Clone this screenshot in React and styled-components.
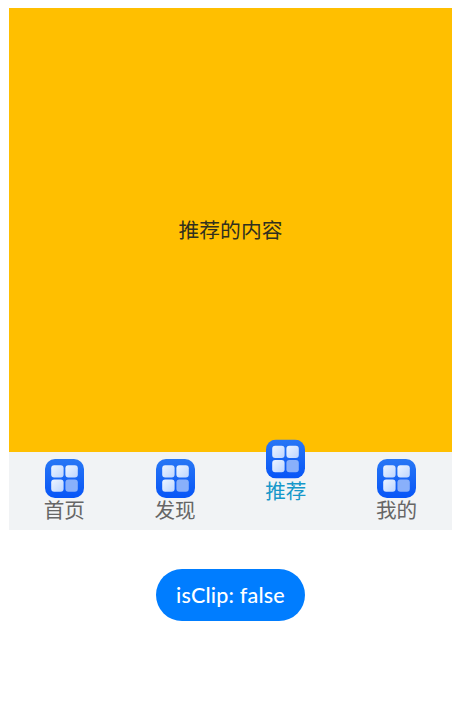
import React, { useState } from "react";
import styled, { createGlobalStyle } from "styled-components";

const GlobalStyle = createGlobalStyle`
  body {
    margin: 0;
    background: #fff;
    font-family: "Noto Sans CJK SC", sans-serif;
  }
`;

const Page = styled.main`
  display: flex;
  flex-direction: column;
  align-items: flex-start;
  box-sizing: border-box;
  height: 705px;
  padding: 8px 12px 0 9px;
`;

const Tabs = styled.section`
  display: flex;
  flex-direction: column;
  width: 443px;
  height: 522px;
  overflow: ${({ $clip }) => ($clip ? "hidden" : "visible")};
`;

const Content = styled.div`
  display: flex;
  flex: 1;
  align-items: center;
  justify-content: center;
  padding-bottom: 3px;
  background: #ffbf00;
  color: #30301f;
  font-size: 20.8px;
  line-height: 28px;
`;

const TabBar = styled.nav`
  display: grid;
  grid-template-columns: repeat(4, 1fr);
  height: 78px;
  background: #f1f3f5;
`;

const Tab = styled.button`
  display: flex;
  flex-direction: column;
  align-items: center;
  justify-content: flex-start;
  padding: 7px 0 0;
  border: 0;
  background: none;
  color: ${({ $active }) => ($active ? "#1698ca" : "#666")};
  font: 20.6px/22px "Noto Sans CJK SC", sans-serif;
  transform: translateY(${({ $active }) => ($active ? "-19.5px" : "0")});
`;

const TabIcon = styled.svg`
  display: block;
  flex: none;
  width: 39px;
  height: 39px;
`;

const ClipButton = styled.button`
  align-self: center;
  width: 149px;
  height: 52px;
  margin: 39px 0 0;
  padding: 0;
  border: 0;
  border-radius: 26px;
  background: #007dff;
  color: #fff;
  font: 500 21.5px/52px Lato, sans-serif;
  letter-spacing: 0.2px;
  white-space: nowrap;
`;

function AppIcon({ id }) {
  return (
    <TabIcon viewBox="0 0 39 39" aria-hidden="true">
      <defs>
        <linearGradient id={`${id}-base`} x1="0" y1="0" x2="0" y2="1">
          <stop offset="0" stopColor="#2877f5" />
          <stop offset="1" stopColor="#0755f7" />
        </linearGradient>
        <linearGradient id={`${id}-tile`} x1="0" y1="0" x2="1" y2="1">
          <stop offset="0" stopColor="#edf5ff" />
          <stop offset="1" stopColor="#bdd5ff" />
        </linearGradient>
      </defs>
      <rect width="39" height="39" rx="10" fill={`url(#${id}-base)`} />
      <rect x="6.2" y="6.2" width="12.4" height="12.4" rx="3" fill={`url(#${id}-tile)`} />
      <rect x="20.4" y="6.2" width="12.4" height="12.4" rx="3" fill={`url(#${id}-tile)`} />
      <rect x="6.2" y="20.4" width="12.4" height="12.4" rx="3" fill={`url(#${id}-tile)`} />
      <rect x="20.4" y="20.4" width="12.4" height="12.4" rx="3" fill="#89b0fb" />
    </TabIcon>
  );
}

const tabs = [
  { id: "home", label: "首页" },
  { id: "discover", label: "发现" },
  { id: "recommend", label: "推荐" },
  { id: "mine", label: "我的" },
];

export default function App() {
  const [active, setActive] = useState(2);
  const [clip, setClip] = useState(false);

  return (
    <>
      <GlobalStyle />
      <Page>
        <Tabs $clip={clip}>
          <Content>{tabs[active].label}的内容</Content>
          <TabBar>
            {tabs.map((tab, i) => (
              <Tab key={tab.id} $active={i === active} onClick={() => setActive(i)}>
                <AppIcon id={tab.id} />
                {tab.label}
              </Tab>
            ))}
          </TabBar>
        </Tabs>
        <ClipButton onClick={() => setClip(!clip)}>isClip: {String(clip)}</ClipButton>
      </Page>
    </>
  );
}
